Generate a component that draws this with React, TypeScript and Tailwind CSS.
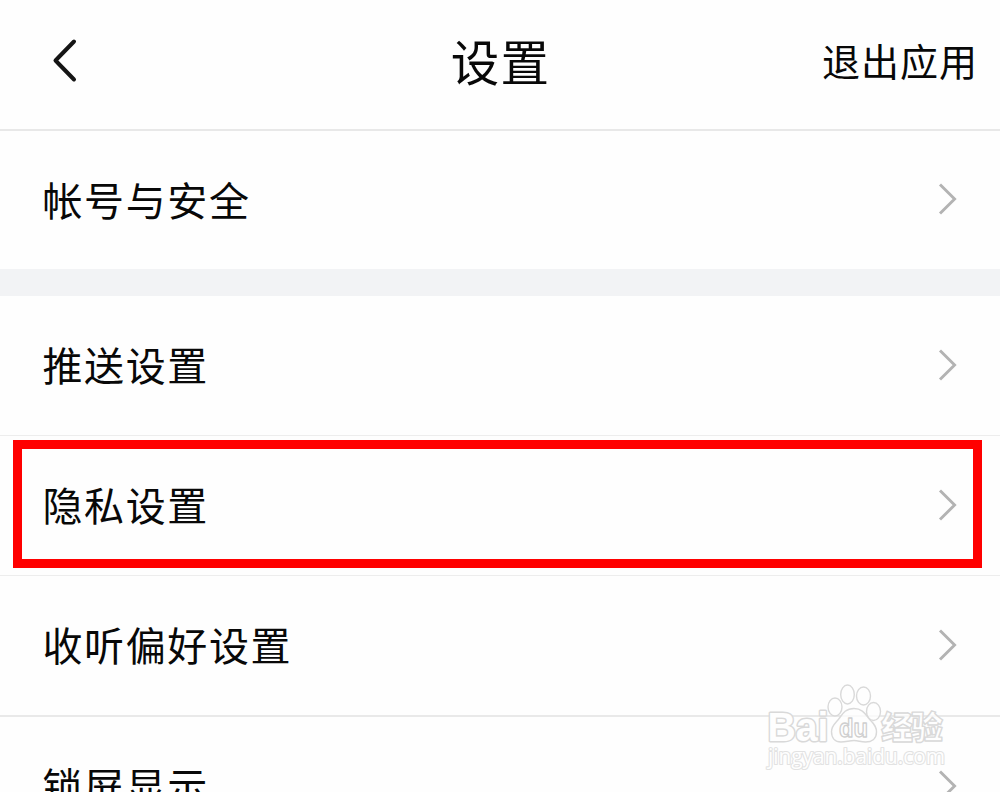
import React from "react";

function Chevron({ className }: { className: string }) {
  return (
    <svg className={`h-9 w-6 shrink-0 ${className}`} viewBox="0 0 24 36" fill="none">
      <path d="M4 3.5 18.600 18 4 32.5" stroke="#b3b3b3" strokeWidth="2.9" />
    </svg>
  );
}

function Row({ label, className, chevronClass = "mb-[1px]" }: { label: string; className: string; chevronClass?: string }) {
  return (
    <div className={`flex shrink-0 items-center justify-between pl-[42.5px] pr-[40px] ${className}`}>
      <span className="mb-[3px] whitespace-nowrap text-[40px] leading-[60px] tracking-[1.6px]">{label}</span>
      <Chevron className={chevronClass} />
    </div>
  );
}

function Watermark() {
  return (
    <svg
      className="absolute left-[760px] top-[680px] h-[100px] w-[200px]"
      viewBox="0 0 200 100"
      fill="#fefefe"
      fillOpacity="0.75"
      stroke="#d9d9d9"
      strokeWidth="1.4"
      strokeLinejoin="round"
    >
      <g fontWeight="700" fontFamily="Liberation Sans, sans-serif" paintOrder="stroke" strokeWidth="3" fillOpacity="1">
        <text x="7.500" y="60.500" fontSize="40" textLength="61" lengthAdjust="spacingAndGlyphs">Bai</text>
      </g>
      <text x="121" y="59" fontSize="32" fontWeight="900" fontFamily="Noto Sans CJK SC, sans-serif" textLength="62">经验</text>
      <ellipse cx="75" cy="27" rx="7" ry="9" />
      <ellipse cx="87.500" cy="14.500" rx="6.800" ry="9.500" />
      <ellipse cx="103.500" cy="16" rx="7" ry="9" />
      <ellipse cx="113.500" cy="31.500" rx="7" ry="9" />
      <path d="M94 28.500c8 0 11 5 14.500 9.500 4 5 8 7 8 14 0 7-5 10-11 10-5 0-7-1.500-11.500-1.500S86 62 81 62c-6 0-9.500-4-9.500-10.500S76 43 79.500 38c3.500-5 6.500-9.500 14.500-9.500Z" />
      <text x="79" y="57" fontSize="25" fontWeight="700" strokeWidth="1.300" stroke="#cfcfcf" fontFamily="Liberation Sans, sans-serif" textLength="29" lengthAdjust="spacingAndGlyphs">du</text>
      <text x="8" y="84" fontSize="21" strokeWidth="2.200" stroke="#e2e2e2" paintOrder="stroke" fillOpacity="1" fontFamily="Open Sans, sans-serif" textLength="177" lengthAdjust="spacingAndGlyphs">jingyan.baidu.com</text>
    </svg>
  );
}

export default function App() {
  return (
    <main className="relative flex h-[792px] w-[1000px] flex-col overflow-hidden bg-[#fefefe] font-['Noto_Sans_CJK_SC',sans-serif] text-[#080808]">
      <header className="grid h-[131px] shrink-0 grid-cols-[1fr_auto_1fr] items-center border-b-2 border-[#e8e8e8] pb-[10px] pl-[46px] pr-[22px]">
        <button className="w-9" aria-label="返回">
          <svg className="h-12 w-9" viewBox="0 0 36 48" fill="none">
            <path d="M28 5.500 9.500 24.500 28 43.500" stroke="#151515" strokeWidth="4" strokeLinecap="round" strokeLinejoin="round" />
          </svg>
        </button>
        <h1 className="-ml-[23px] text-center text-[48.5px] leading-[72px] tracking-[1.2px]">设置</h1>
        <button className="whitespace-nowrap text-right text-[38px] leading-[56px] tracking-[1px]">退出应用</button>
      </header>
      <Row label="帐号与安全" className="h-[138px]" chevronClass="mb-[3px]" />
      <div className="h-[27px] shrink-0 bg-[#f2f3f5]" />
      <Row label="推送设置" className="h-[140px] border-b border-[#ededed]" />
      <Row label="隐私设置" className="h-[140px] border-b border-[#ededed]" />
      <Row label="收听偏好设置" className="h-[141px] border-b-2 border-[#e9e9e9]" />
      <Row label="锁屏显示" className="h-[138px]" />
      <div className="absolute left-[13px] top-[440px] h-[128px] w-[969px] border-[9px] border-[#ff0000]" />
      <Watermark />
    </main>
  );
}
